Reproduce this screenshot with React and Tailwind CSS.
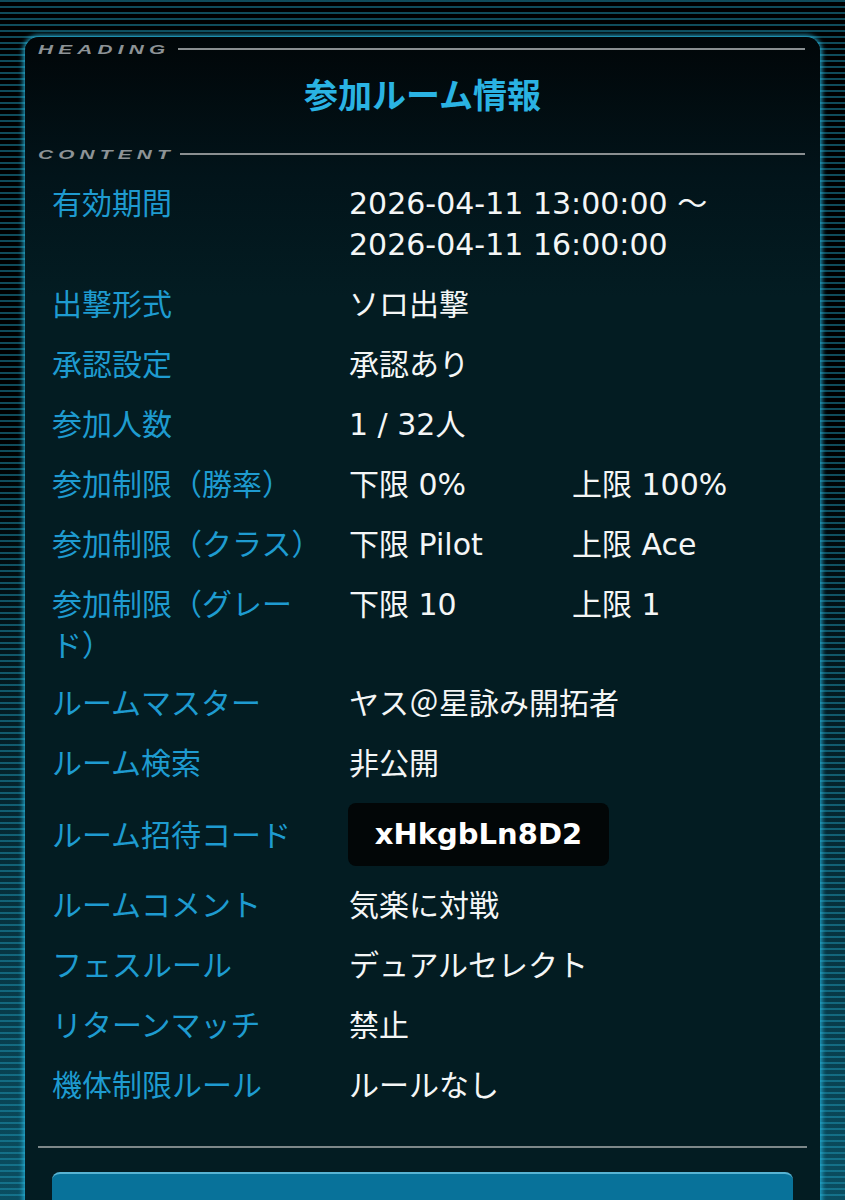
import React from 'react';

const jp = { fontFamily: '"DejaVu Sans", "Noto Sans CJK JP", sans-serif' };
const cjk = { fontFamily: '"Noto Sans CJK JP", sans-serif' };

const rows = [
  { label: '有効期間', value: ['2026-04-11 13:00:00 ～', '2026-04-11 16:00:00'] },
  { label: '出撃形式', value: ['ソロ出撃'] },
  { label: '承認設定', value: ['承認あり'] },
  { label: '参加人数', value: ['1 / 32人'] },
  { label: '参加制限（勝率）', pair: ['下限 0%', '上限 100%'] },
  { label: '参加制限（クラス）', pair: ['下限 Pilot', '上限 Ace'] },
  { label: '参加制限（グレード）', pair: ['下限 10', '上限 1'] },
  { label: 'ルームマスター', value: ['ヤス＠星詠み開拓者'] },
  { label: 'ルーム検索', value: ['非公開'] },
  { label: 'ルーム招待コード', code: 'xHkgbLn8D2' },
  { label: 'ルームコメント', value: ['気楽に対戦'] },
  { label: 'フェスルール', value: ['デュアルセレクト'] },
  { label: 'リターンマッチ', value: ['禁止'] },
  { label: '機体制限ルール', value: ['ルールなし'] },
];

function SectionLabel({ text, width }) {
  return (
    <div className="flex items-center pl-[13px] pr-[15px]">
      <div className={width}>
        <span
          className="inline-block origin-left scale-x-[1.6] text-[13px] font-bold italic tracking-[0.25em] text-[#8d9396]"
          style={{ fontFamily: '"Liberation Sans", sans-serif' }}
        >
          {text}
        </span>
      </div>
      <div className="h-[2px] flex-1 bg-[#8a8f91]" />
    </div>
  );
}

function Row({ row }) {
  return (
    <div className={`flex ${row.code ? 'items-center' : 'items-start'} mb-[19px]`}>
      <div className="-mt-[2px] w-[297px] shrink-0 pr-[27px] text-[#1e9bd0]" style={cjk}>
        {row.label}
      </div>
      <div className="flex-1 text-[#f4f6f6]">
        {row.value && row.value.map((v) => <div key={v}>{v}</div>)}
        {row.pair && (
          <div className="flex">
            <div className="w-[223px]">{row.pair[0]}</div>
            <div>{row.pair[1]}</div>
          </div>
        )}
        {row.code && (
          <div className="-ml-px flex h-[63px] w-[261px] items-center justify-center rounded-[8px] bg-[#020607] text-[29px] font-bold text-white">
            {row.code}
          </div>
        )}
      </div>
    </div>
  );
}

export default function App() {
  return (
    <div className="min-h-[1200px] bg-[linear-gradient(to_bottom,#000_0%,#000_35%,#0b5266_100%)]" style={jp}>
      <div className="min-h-[1200px] overflow-hidden bg-[repeating-linear-gradient(to_bottom,rgba(30,150,180,0.5)_0px,rgba(30,150,180,0.5)_2px,transparent_2px,transparent_6px)] px-[25px] pt-[37px]">
        <div className="min-h-[1200px] rounded-t-[14px] bg-[linear-gradient(to_bottom,#010608_0px,#02141a_140px,#031c22_260px,#031c22_100%)] shadow-[0_0_5px_2px_rgba(40,185,225,0.85)]">
          <SectionLabel text="HEADING" width="w-[140px]" />
          <h1
            className="pb-[26px] pt-[11px] text-center text-[34px] font-bold leading-[44px] text-[#2ab3e3]"
            style={cjk}
          >
            参加ルーム情報
          </h1>
          <SectionLabel text="CONTENT" width="w-[142px]" />
          <div className="pl-[27px] pr-[20px] pt-[17px] text-[30px] leading-[41px]">
            {rows.map((row) => (
              <Row key={row.label} row={row} />
            ))}
          </div>
          <div className="mx-[13px] mt-[40px] h-[2px] bg-[#7d8789]" />
          <div className="mx-[27px] mt-[24px] h-[60px] rounded-t-[8px] border-t-2 border-[#58b4d4] bg-[#08729a]" />
        </div>
      </div>
    </div>
  );
}
